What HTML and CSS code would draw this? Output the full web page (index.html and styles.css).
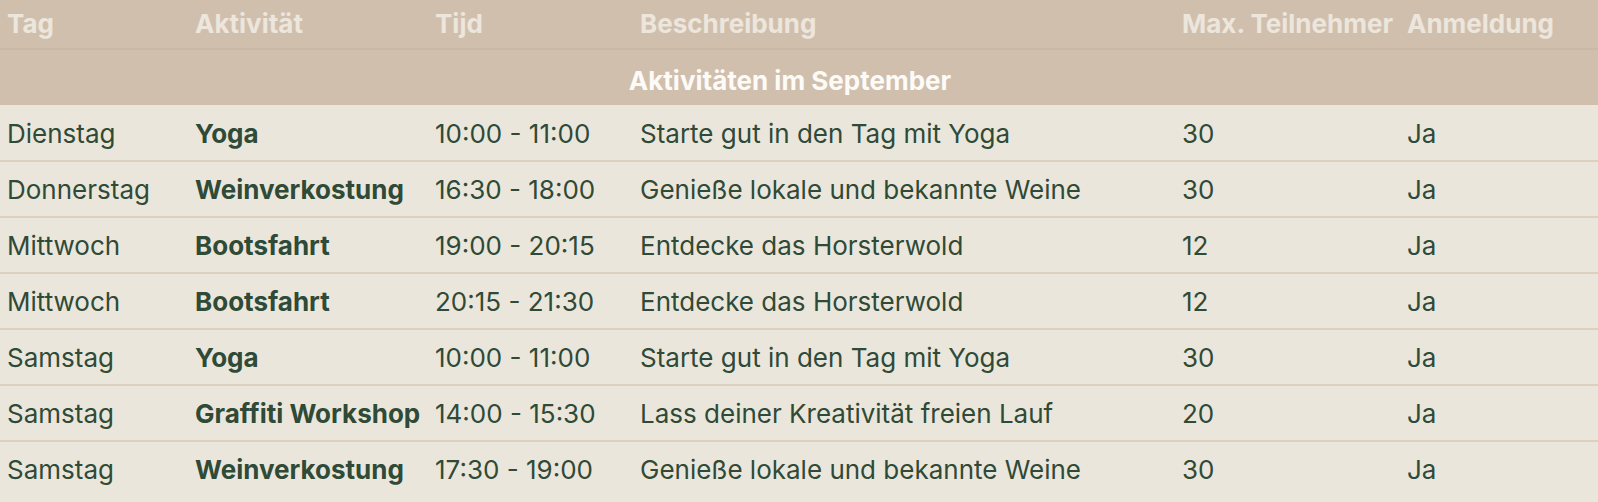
FILE: index.html
```html
<!DOCTYPE html>
<html lang="de">
<head>
<meta charset="utf-8">
<title>Aktivitäten</title>
<link rel="stylesheet" href="styles.css">
</head>
<body>
<table class="schedule">
  <colgroup>
    <col class="c-tag">
    <col class="c-akt">
    <col class="c-zeit">
    <col class="c-besch">
    <col class="c-max">
    <col class="c-anm">
  </colgroup>
  <thead>
    <tr class="head-row">
      <th>Tag</th>
      <th>Aktivität</th>
      <th>Tijd</th>
      <th>Beschreibung</th>
      <th>Max. Teilnehmer</th>
      <th>Anmeldung</th>
    </tr>
    <tr class="section-row">
      <th colspan="6">Aktivitäten im September</th>
    </tr>
  </thead>
  <tbody>
    <tr><td>Dienstag</td><td class="act">Yoga</td><td>10:00 - 11:00</td><td>Starte gut in den Tag mit Yoga</td><td>30</td><td>Ja</td></tr>
    <tr><td>Donnerstag</td><td class="act">Weinverkostung</td><td>16:30 - 18:00</td><td>Genieße lokale und bekannte Weine</td><td>30</td><td>Ja</td></tr>
    <tr><td>Mittwoch</td><td class="act">Bootsfahrt</td><td>19:00 - 20:15</td><td>Entdecke das Horsterwold</td><td>12</td><td>Ja</td></tr>
    <tr><td>Mittwoch</td><td class="act">Bootsfahrt</td><td>20:15 - 21:30</td><td>Entdecke das Horsterwold</td><td>12</td><td>Ja</td></tr>
    <tr><td>Samstag</td><td class="act">Yoga</td><td>10:00 - 11:00</td><td>Starte gut in den Tag mit Yoga</td><td>30</td><td>Ja</td></tr>
    <tr><td>Samstag</td><td class="act">Graffiti Workshop</td><td>14:00 - 15:30</td><td>Lass deiner Kreativität freien Lauf</td><td>20</td><td>Ja</td></tr>
    <tr><td>Samstag</td><td class="act">Weinverkostung</td><td>17:30 - 19:00</td><td>Genieße lokale und bekannte Weine</td><td>30</td><td>Ja</td></tr>
  </tbody>
</table>
</body>
</html>
```
FILE: styles.css
```css
html, body {
  margin: 0;
  padding: 0;
  background: #ebe6dc;
}

body {
  font-family: Inter, "Noto Sans", sans-serif;
  color: #2f4a36;
}

.schedule {
  width: 100%;
  border-collapse: collapse;
  table-layout: fixed;
  font-size: 26px;
  line-height: 32px;
}

.c-tag { width: 188px; }
.c-akt { width: 240px; }
.c-zeit { width: 205px; }
.c-besch { width: 542px; }
.c-max { width: 225px; }
.c-anm { width: auto; }

.head-row th {
  background: #d1bfae;
  color: #ece6dc;
  font-weight: 700;
  text-align: left;
  white-space: nowrap;
  padding: 8px 7px;
  border-bottom: 2px solid #cab7a5;
}

.section-row th {
  background: #d1bfae;
  color: #fdfbf7;
  font-weight: 700;
  text-align: center;
  padding: 15px 25px 8px 7px;
}

tbody td {
  padding: 12px 7px 10px;
  border-top: 2px solid #dcd1c1;
  white-space: nowrap;
  font-weight: 400;
}

tbody tr:first-child td {
  border-top: none;
  padding-top: 13px;
}

tbody td.act {
  font-weight: 700;
}
```
